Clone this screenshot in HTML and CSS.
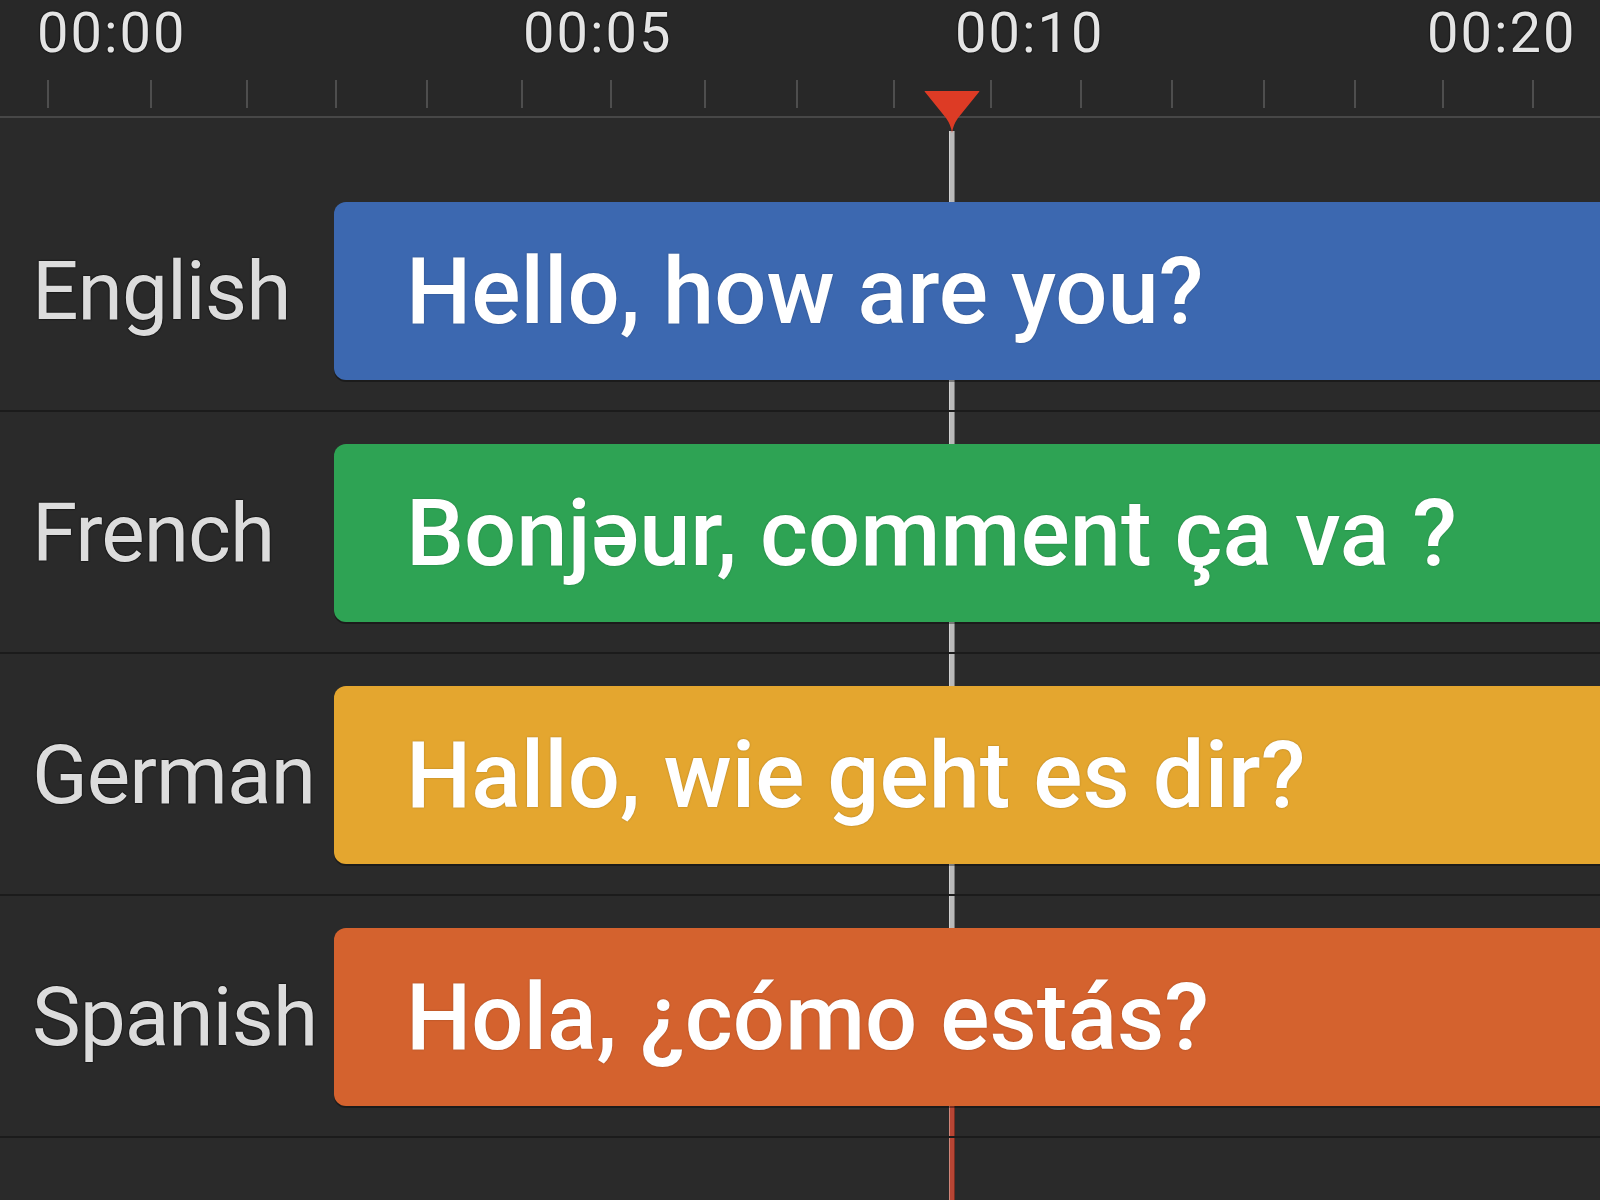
FILE: index.html
```html
<!DOCTYPE html>
<html lang="en">
<head>
<meta charset="utf-8">
<title>Subtitle timeline</title>
<link rel="stylesheet" href="styles.css">
</head>
<body>
<div class="timeline">
  <header class="ruler">
    <div class="stamps">
      <span class="stamp">00:00</span>
      <span class="stamp">00:05</span>
      <span class="stamp">00:10</span>
      <span class="stamp">00:20</span>
    </div>
    <div class="ticks">
      <i></i><i></i><i></i><i></i><i></i><i></i><i></i><i></i><i></i><i></i><i></i><i></i><i></i><i></i><i></i><i></i><i></i>
    </div>
  </header>

  <div class="playhead">
    <svg class="head" width="58" height="44" viewBox="0 0 58 44">
      <path d="M2 1 H56 Q57 1 56 2 L35 28 Q30 35 29 43 Q28 35 23 28 L2 2 Q1 1 2 1 Z" fill="#dd3b25"/>
    </svg>
    <div class="stem"></div>
  </div>

  <div class="tracks">
    <div class="track">
      <div class="lang">English</div>
      <div class="clip blue">Hello, how are you?</div>
    </div>
    <div class="track">
      <div class="lang">French</div>
      <div class="clip green">Bonjəur, comment ça va ?</div>
    </div>
    <div class="track">
      <div class="lang">German</div>
      <div class="clip yellow">Hallo, wie geht es dir?</div>
    </div>
    <div class="track">
      <div class="lang">Spanish</div>
      <div class="clip orange">Hola, ¿cómo estás?</div>
    </div>
  </div>
</div>
</body>
</html>
```

FILE: styles.css
```css
html, body {
  margin: 0;
  padding: 0;
  background: #2a2a2a;
}

body {
  width: 1600px;
  height: 1200px;
  overflow: hidden;
  font-family: Roboto, "Liberation Sans", sans-serif;
}

.timeline {
  position: relative;
  height: 1200px;
  background: #2a2a2a;
}

/* ruler */
.ruler {
  height: 116px;
  border-bottom: 2px solid #474747;
  display: flex;
  flex-direction: column;
  background: #282828;
}

.stamps {
  display: grid;
  grid-template-columns: 486px 432px 472px auto;
  align-items: start;
  padding-left: 37px;
  height: 76px;
  box-sizing: border-box;
}

.stamp {
  display: block;
  font-size: 56px;
  line-height: normal;
  color: #e4e4e4;
  letter-spacing: 2px;
  text-shadow: 0 0 2px #000, 0 0 1px #000;
}

.ticks {
  display: grid;
  grid-template-columns: 103px 96px 89px 91px 95px 89px 94px 92px 97px 97px 90px 91px 92px 91px 88px 90px auto;
  margin-left: 47px;
  padding-top: 4px;
  height: 28px;
}

.ticks i {
  display: block;
  width: 2px;
  height: 28px;
  background: #4e4e4e;
}

/* playhead */
.playhead {
  position: absolute;
  left: 923px;
  top: 90px;
  width: 58px;
  bottom: 0;
  z-index: 1;
  display: flex;
  flex-direction: column;
  align-items: center;
}

.head {
  display: block;
  flex: none;
  position: relative;
  z-index: 2;
}

.stem {
  width: 6px;
  margin-top: -3px;
  flex: 1;
  background:
    linear-gradient(to bottom, #b9b9b9 0, #b9b9b9 975px, #b84534 975px, #b84534 100%);
  box-shadow: inset 1px 0 0 rgba(255,255,255,0.35), inset -1px 0 0 rgba(0,0,0,0.35);
}

/* tracks */
.tracks {
  padding-top: 52px;
}

.track {
  position: relative;
  z-index: 2;
  display: grid;
  grid-template-columns: 334px 1fr;
  align-items: center;
  padding: 32px 0 30px;
  border-bottom: 2px solid #1b1b1b;
}

.lang {
  padding-left: 32px;
  font-size: 82px;
  font-weight: 400;
  color: #dcdcdc;
  letter-spacing: -1px;
  white-space: nowrap;
  text-shadow: 0 0 2px #000, 0 0 1px #000;
}

.clip {
  height: 178px;
  margin-right: -40px;
  border-radius: 12px;
  display: flex;
  align-items: center;
  padding-left: 72px;
  font-size: 92px;
  font-weight: 500;
  color: #ffffff;
  white-space: nowrap;
  text-shadow: 0 0 2px rgba(0,0,0,0.25);
  box-shadow: 0 2px 0 rgba(0,0,0,0.35);
}

.blue { background: #3c68b0; }
.green { background: #2ea354; }
.yellow { background: #e4a62f; }
.orange { background: #d4622e; }
```
